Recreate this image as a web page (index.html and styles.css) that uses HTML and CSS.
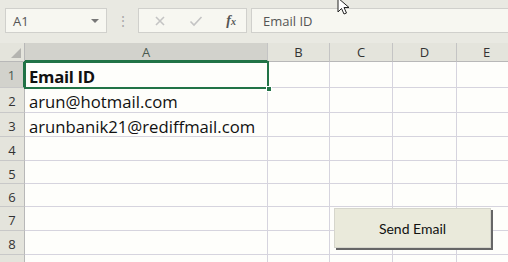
FILE: index.html
```html
<!DOCTYPE html>
<html lang="en">
<head>
    <meta charset="UTF-8">
    <title>Send Email</title>
    <link rel="stylesheet" href="styles.css">
</head>
<body>
    <div class="toolbar">
        <div class="name-box">
            <span>A1</span>
            <span class="caret"></span>
        </div>
        <div class="grip">&#8942;</div>
        <div class="fx-buttons">
            <svg width="12" height="12" viewBox="0 0 12 12"><path d="M2 2 L10 10 M10 2 L2 10" stroke="#c4c4c4" stroke-width="1.6" fill="none"/></svg>
            <svg width="14" height="12" viewBox="0 0 14 12"><path d="M1.5 6.5 L5 10 L12.5 2" stroke="#c4c4c4" stroke-width="1.6" fill="none"/></svg>
            <span class="fx">f<span class="x">x</span></span>
        </div>
        <div class="formula">Email ID</div>
        <svg class="cursor" width="14" height="20" viewBox="0 0 14 20"><path d="M1 1 L1 15 L4.5 11.5 L7 17 L9.5 16 L7 10.5 L12 10.5 Z" fill="#fff" stroke="#222" stroke-width="1"/></svg>
    </div>

    <div class="sheet">
        <div class="corner"><span class="tri"></span></div>
        <div class="col-head selected">A</div>
        <div class="col-head">B</div>
        <div class="col-head">C</div>
        <div class="col-head">D</div>
        <div class="col-head">E</div>

        <div class="row-head selected">1</div>
        <div class="cell bold">Email ID</div>
        <div class="cell"></div><div class="cell"></div><div class="cell"></div><div class="cell"></div>

        <div class="row-head">2</div>
        <div class="cell">arun@hotmail.com</div>
        <div class="cell"></div><div class="cell"></div><div class="cell"></div><div class="cell"></div>

        <div class="row-head">3</div>
        <div class="cell">arunbanik21@rediffmail.com</div>
        <div class="cell"></div><div class="cell"></div><div class="cell"></div><div class="cell"></div>

        <div class="row-head">4</div>
        <div class="cell"></div><div class="cell"></div><div class="cell"></div><div class="cell"></div><div class="cell"></div>

        <div class="row-head">5</div>
        <div class="cell"></div><div class="cell"></div><div class="cell"></div><div class="cell"></div><div class="cell"></div>

        <div class="row-head">6</div>
        <div class="cell"></div><div class="cell"></div><div class="cell"></div><div class="cell"></div><div class="cell"></div>

        <div class="row-head">7</div>
        <div class="cell"></div><div class="cell"></div><div class="cell"></div><div class="cell"></div><div class="cell"></div>

        <div class="row-head">8</div>
        <div class="cell"></div><div class="cell"></div><div class="cell"></div><div class="cell"></div><div class="cell"></div>

        <div class="row-head"></div>
        <div class="cell"></div><div class="cell"></div><div class="cell"></div><div class="cell"></div><div class="cell"></div>

        <!-- selection round A1 -->
        <div class="selection"><span class="handle"></span></div>

        <button class="send-btn">Send Email</button>
    </div>
</body>
</html>
```

FILE: styles.css
```css
* {
    margin: 0;
    padding: 0;
    box-sizing: border-box;
}

body {
    font-family: "Open Sans", sans-serif;
    background-color: #fefefb;
    width: 508px;
    height: 262px;
    overflow: hidden;
}

.toolbar {
    position: relative;
    display: flex;
    align-items: flex-start;
    height: 43px;
    padding-top: 8px;
    background-color: #e9e9e2;
}

.name-box {
    display: flex;
    align-items: center;
    justify-content: space-between;
    margin-left: 5px;
    width: 102px;
    height: 25px;
    padding: 0 7px 0 7px;
    background-color: #f7f7f1;
    border: 1px solid #d0d0cc;
    font-size: 13px;
    color: #555;
}

.caret {
    width: 0;
    height: 0;
    border-left: 4px solid transparent;
    border-right: 4px solid transparent;
    border-top: 4px solid #777;
}

.grip {
    width: 31px;
    text-align: center;
    font-size: 14px;
    line-height: 25px;
    color: #aaa;
}

.fx-buttons {
    display: flex;
    align-items: center;
    justify-content: space-between;
    width: 109px;
    height: 25px;
    padding: 0 10px 0 15px;
    background-color: #f7f7f1;
    border: 1px solid #d0d0cc;
}

.fx {
    font-family: "Liberation Serif", serif;
    font-style: italic;
    font-weight: bold;
    font-size: 14px;
    color: #555;
}

.fx .x {
    font-size: 10px;
}

.formula {
    flex: 1;
    margin-left: 4px;
    height: 25px;
    padding-left: 11px;
    line-height: 24px;
    background-color: #f7f7f1;
    border: 1px solid #d0d0cc;
    border-right: none;
    font-size: 13px;
    color: #555;
}

.cursor {
    position: absolute;
    left: 337px;
    top: -3px;
}

.sheet {
    position: relative;
    display: grid;
    grid-template-columns: 25px 243px 62px 63px 64px 60px;
    grid-template-rows: 19px 26px 25px 24px 24px 23px 23px 24px 24px 20px;
}

.corner {
    position: relative;
    background-color: #e4e4dc;
    border-right: 1px solid #b8b8b8;
    border-bottom: 1px solid #b8b8b8;
}

.tri {
    position: absolute;
    right: 3px;
    bottom: 3px;
    width: 0;
    height: 0;
    border-left: 10px solid transparent;
    border-bottom: 10px solid #b4b4b0;
}

.col-head {
    background-color: #e4e4dc;
    border-right: 1px solid #c4c4c4;
    border-bottom: 1px solid #b8b8b8;
    text-align: center;
    font-size: 13px;
    line-height: 19px;
    color: #333;
}

.row-head {
    background-color: #e4e4dc;
    border-right: 1px solid #b8b8b8;
    border-bottom: 1px solid #c8c8c8;
    text-align: center;
    font-size: 13px;
    padding-top: 4px;
    color: #333;
}

.col-head.selected,
.row-head.selected {
    background-color: #d2d2cc;
    color: #4a5a50;
}

.col-head.selected {
    border-bottom: 2px solid #217346;
}

.row-head.selected {
    border-right: 2px solid #217346;
}

.cell {
    border-right: 1px solid #d6d4de;
    border-bottom: 1px solid #d6d4de;
    padding: 2px 0 0 4px;
    font-size: 16.7px;
    line-height: 23px;
    color: #111;
    white-space: nowrap;
}

.cell.bold {
    padding-top: 3px;
    font-weight: bold;
    letter-spacing: -0.3px;
}

.selection {
    position: absolute;
    left: 24px;
    top: 18px;
    width: 245px;
    height: 28px;
    border: 2px solid #217346;
}

.handle {
    position: absolute;
    right: -5px;
    bottom: -5px;
    width: 6px;
    height: 6px;
    background-color: #217346;
    border: 1px solid #fff;
}

.send-btn {
    position: absolute;
    left: 334px;
    top: 165px;
    width: 157px;
    height: 40px;
    background-color: #eaeadb;
    border: 1px solid #d6d6cc;
    box-shadow: 2px 2px 0 #666;
    font-family: Lato, "Open Sans", sans-serif;
    font-size: 14px;
    color: #111;
}
```
